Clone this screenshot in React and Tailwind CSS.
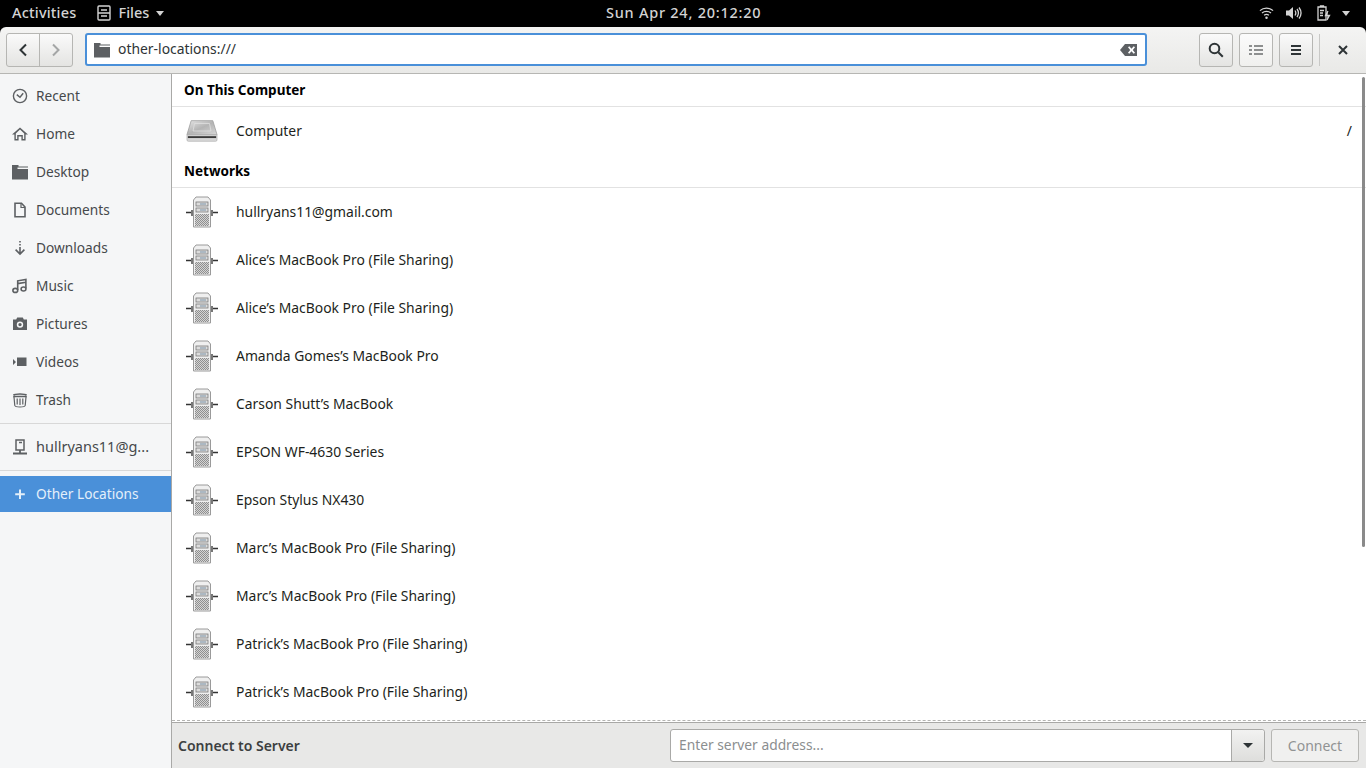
import React from 'react';

const font = "font-['Noto_Sans','Open_Sans',sans-serif]";

const Clock = () => (
  <svg width="16" height="16" viewBox="0 0 16 16" fill="none" stroke="#5d6063" strokeWidth="1.4"><circle cx="8" cy="8" r="6.6" /><path d="M4.8 6.6 8 9.2l3.2-4" /></svg>
);
const HomeIcon = () => (
  <svg width="16" height="16" viewBox="0 0 16 16" fill="#5d6063"><path d="M8 1.500 0 8.500h2.400v6h4.200v-4h2.800v4h4.200v-6H16zM8 3.600l4.200 3.800v5.700h-1.400v-4H5.200v4H3.800V7.400z" /></svg>
);
const FolderIcon = ({ color = '#5d6063' }) => (
  <svg width="16" height="16" viewBox="0 0 16 16" fill={color}><path d="M0 1h6.500v1.400H16v1.200H5.500V5H16v10.500H0z" /></svg>
);
const DocIcon = () => (
  <svg width="16" height="16" viewBox="0 0 16 16" fill="none" stroke="#5d6063" strokeWidth="1.600"><path d="M3 1.300h6.500L13 5v9.700H3z" /><path d="M9 1.500V5.500h4" strokeWidth="1.200" /></svg>
);
const DownIcon = () => (
  <svg width="16" height="16" viewBox="0 0 16 16" fill="none" stroke="#5d6063" strokeWidth="1.600"><path d="M8 1v1.400M8 4v1.400M8 7v6.500M3.600 9.600 8 14l4.400-4.400" /></svg>
);
const MusicIcon = () => (
  <svg width="16" height="16" viewBox="0 0 16 16" fill="none" stroke="#5d6063" strokeWidth="1.600"><path d="M5.700 12V2.800l8.200-1.400v9.200M5.700 5.600l8.200-1.400" /><ellipse cx="3.300" cy="12.400" rx="2.400" ry="2" /><ellipse cx="11.500" cy="11" rx="2.400" ry="2" /></svg>
);
const CameraIcon = () => (
  <svg width="16" height="16" viewBox="0 0 16 16" fill="#5d6063"><path fillRule="evenodd" d="M1 3.500h3.200L5.200 1.500h5.600l1 2H15V14H1zM8 5.400a3.200 3.200 0 1 0 0 6.400 3.200 3.200 0 0 0 0-6.400zm0 1.500a1.700 1.700 0 1 1 0 3.400 1.700 1.700 0 0 1 0-3.400z" /></svg>
);
const VideoIcon = () => (
  <svg width="16" height="16" viewBox="0 0 16 16" fill="#5d6063"><path d="M5 3.500h9.500V12H5zM1 5l3 3-3 3z" /></svg>
);
const TrashIcon = () => (
  <svg width="16" height="16" viewBox="0 0 16 16" fill="none" stroke="#5d6063" strokeWidth="1.200"><path d="M1.500 3.200C3 1.500 13 1.500 14.500 3.200M1.200 4.500h13.600" strokeWidth="1.600" /><path d="M2 5l.8 8.500c.2 1 1.500 1.500 5.200 1.500s5-.5 5.200-1.500L14 5" /><path d="M5.200 6.500v6M8 6.500v6.500M10.800 6.500v6" /></svg>
);
const ServerSmall = () => (
  <svg width="16" height="16" viewBox="0 0 16 16" fill="none" stroke="#5d6063" strokeWidth="1.500"><path d="M4 1h8v10H4z" /><path d="M7 3.500h3" /><path d="M8 11v2.500M1 14.500h14" strokeWidth="1.800" /></svg>
);
const PlusIcon = () => (
  <svg width="16" height="16" viewBox="0 0 16 16" fill="none" stroke="#e4eff9" strokeWidth="2"><path d="M8 3.500v9.500M3.200 8.200h9.600" /></svg>
);

// the drive picture for "Computer"
const DriveIcon = () => (
  <svg width="34" height="24" viewBox="0 0 34 24">
    <defs>
      <linearGradient id="driveTop" x1="0" y1="0" x2="1" y2="1">
        <stop offset="0" stopColor="#e6e6e6" />
        <stop offset="0.5" stopColor="#b4b4b4" />
        <stop offset="1" stopColor="#d8d8d8" />
      </linearGradient>
    </defs>
    <path d="M5.500 1h23L33 16H1z" fill="url(#driveTop)" stroke="#9a9a9a" strokeWidth="0.800" />
    <path d="M9 4h16l1.500 8h-19z" fill="none" stroke="#e2e2e2" strokeWidth="0.800" />
    <path d="M1 16h32v5.500c0 .9-.6 1.500-1.500 1.500h-29c-.9 0-1.500-.6-1.500-1.500z" fill="#d6d6d6" stroke="#a8a8a8" strokeWidth="0.600" />
    <path d="M2 18.500h30" stroke="#3a3a3a" strokeWidth="2" />
  </svg>
);

// tower with two cables, used by every network row
const ServerIcon = () => (
  <svg width="32" height="32" viewBox="0 0 32 32">
    <defs>
      <pattern id="dither" width="2" height="2" patternUnits="userSpaceOnUse">
        <rect width="2" height="2" fill="#d4d4d4" />
        <rect width="1" height="1" fill="#8f8f8f" />
        <rect x="1" y="1" width="1" height="1" fill="#8f8f8f" />
      </pattern>
    </defs>
    <path d="M0 16.500h7M25 16.500h7" stroke="#333" strokeWidth="1.600" />
    <rect x="5" y="14" width="3" height="6" fill="#777" />
    <rect x="24" y="14" width="3" height="6" fill="#777" />
    <path d="M7.500 4 10 1h12l2.500 3v27h-17z" fill="#efefef" stroke="#9a9a9a" strokeWidth="1" />
    <rect x="10" y="6" width="12" height="4" fill="#dcdcdc" stroke="#7a7a7a" strokeWidth="0.800" />
    <rect x="10" y="12" width="12" height="4" fill="#dcdcdc" stroke="#7a7a7a" strokeWidth="0.800" />
    <rect x="14" y="7.500" width="6" height="1" fill="#7c93a8" />
    <rect x="14" y="13.500" width="6" height="1" fill="#7c93a8" />
    <rect x="9" y="18" width="14" height="12" fill="url(#dither)" />
  </svg>
);

const places = [
  ['Recent', Clock],
  ['Home', HomeIcon],
  ['Desktop', FolderIcon],
  ['Documents', DocIcon],
  ['Downloads', DownIcon],
  ['Music', MusicIcon],
  ['Pictures', CameraIcon],
  ['Videos', VideoIcon],
  ['Trash', TrashIcon],
];

const networks = [
  'hullryans11@gmail.com',
  'Alice’s MacBook Pro (File Sharing)',
  'Alice’s MacBook Pro (File Sharing)',
  'Amanda Gomes’s MacBook Pro',
  'Carson Shutt’s MacBook',
  'EPSON WF-4630 Series',
  'Epson Stylus NX430',
  'Marc’s MacBook Pro (File Sharing)',
  'Marc’s MacBook Pro (File Sharing)',
  'Patrick’s MacBook Pro (File Sharing)',
  'Patrick’s MacBook Pro (File Sharing)',
];

const btn = 'h-[34px] w-[34px] flex items-center justify-center rounded-[3px] border border-[#b6b6b3] bg-gradient-to-b from-[#fafafa] to-[#e4e4e2]';

function TopBar() {
  return (
    <div className="h-[27px] shrink-0 bg-black text-[#d3d3d3] flex items-center text-[14.500px] font-medium relative pb-[1px]">
      <span className="ml-3 tracking-[0.2px]">Activities</span>
      <div className="ml-[21px] flex items-center">
        <svg width="14" height="16" viewBox="0 0 14 16" fill="none" stroke="#d3d3d3" strokeWidth="1.400"><rect x="1" y="1" width="12" height="14" rx="1" /><path d="M4 5h6M1 8h12M4 11h6" /></svg>
        <span className="ml-[7px]">Files</span>
        <span className="ml-[7px] w-0 h-0 border-x-[4.500px] border-x-transparent border-t-[5px] border-t-[#d3d3d3]" />
      </div>
      <span className="absolute left-[606px] tracking-[0.75px]">Sun Apr 24, 20:12:20</span>
      <div className="ml-auto mr-[16px] flex items-center">
        <svg width="15" height="14" viewBox="0 0 16 14" fill="none" stroke="#d3d3d3" strokeWidth="1.300"><path d="M1 4.500c4-3.500 10-3.500 14 0M3.200 7c2.700-2.300 6.900-2.300 9.600 0M5.400 9.300c1.500-1.100 3.700-1.100 5.200 0" /><circle cx="8" cy="12" r="1.300" fill="#d3d3d3" stroke="none" /></svg>
        <svg className="ml-[12px]" width="16" height="14" viewBox="0 0 16 14" fill="none" stroke="#d3d3d3" strokeWidth="1.300"><path d="M0 4.500h3L7 1v12L3 9.500H0z" fill="#d3d3d3" stroke="none" /><path d="M9 4.500c1 1.500 1 3.500 0 5M11 3c1.800 2.500 1.800 5.500 0 8M13 1.500c2.600 3.500 2.600 7.500 0 11" /></svg>
        <svg className="ml-[15px]" width="14" height="16" viewBox="0 0 14 16" fill="none" stroke="#d3d3d3" strokeWidth="1.300"><path d="M1 2h8v13H1zM3.500 2V.800h3V2M3 5.500h4M3 8h3M3 10.500h3" /><path d="M11 6 8.500 10.500h4L10 15" fill="#d3d3d3" /></svg>
        <span className="ml-[11px] w-0 h-0 border-x-[4.500px] border-x-transparent border-t-[5px] border-t-[#d3d3d3]" />
      </div>
    </div>
  );
}

function Header() {
  return (
    <div className="h-[47px] shrink-0 bg-gradient-to-b from-[#f4f4f3] to-[#e9e9e7] border-b border-[#b6b6b3] rounded-t-[6px] flex items-center pl-[6px] pr-0 pb-[1px]">
      <div className="flex h-[34px] w-[67px] rounded-[3px] border border-[#b6b6b3] bg-gradient-to-b from-[#fafafa] to-[#e4e4e2]">
        <div className="w-[33px] flex items-center justify-center border-r border-[#b6b6b3]">
          <svg width="12" height="14" viewBox="0 0 12 14" fill="none" stroke="#2e3436" strokeWidth="2"><path d="M9 1.500 3.500 7 9 12.500" /></svg>
        </div>
        <div className="flex-1 flex items-center justify-center">
          <svg width="12" height="14" viewBox="0 0 12 14" fill="none" stroke="#a4a6a6" strokeWidth="2"><path d="M3 1.500 8.500 7 3 12.500" /></svg>
        </div>
      </div>
      <div className="ml-[12px] w-[1062px] h-[33px] bg-white rounded-[3px] border-2 border-[#4a90d9] flex items-center pl-[7px] pr-[7px] text-[13.900px] text-[#2e3436]">
        <FolderIcon color="#5d6063" />
        <span className="ml-[8px]">other-locations:///</span>
        <svg className="ml-auto" width="18" height="14" viewBox="0 0 18 14"><path fillRule="evenodd" fill="#5d6063" d="M5 1h12v12H5L0 7zM8 4.200 10.200 7 8 9.800l1.300 1 2.200-2.500 2.200 2.500 1.300-1L12.800 7 15 4.200l-1.300-1-2.200 2.500-2.200-2.500z" /></svg>
      </div>
      <div className={`ml-[52px] ${btn}`}>
        <svg width="16" height="16" viewBox="0 0 16 16" fill="none" stroke="#2e3436" strokeWidth="2"><circle cx="6.500" cy="6.500" r="4.800" /><path d="m10.300 10.300 4.500 4.500" /></svg>
      </div>
      <div className={`ml-[6px] ${btn} from-[#fbfbfb] to-[#f0f0ee]`}>
        <svg width="14" height="12" viewBox="0 0 14 12" fill="#8d8f8f"><path d="M0 1h3v2H0zM5 1h9v2H5zM0 5h3v2H0zM5 5h9v2H5zM0 9h3v2H0zM5 9h9v2H5z" /></svg>
      </div>
      <div className={`ml-[6px] ${btn}`}>
        <svg width="12" height="12" viewBox="0 0 12 12" fill="#2e3436"><path d="M1 1h10v2H1zM1 5h10v2H1zM1 9h10v2H1z" /></svg>
      </div>
      <div className="ml-[6px] h-[32px] border-l border-[#c8c8c6]" />
      <div className="flex-1 flex justify-center pr-[1px]">
        <svg width="10" height="10" viewBox="0 0 10 10" fill="none" stroke="#2e3436" strokeWidth="2"><path d="m1 1 8 8M9 1 1 9" /></svg>
      </div>
    </div>
  );
}

function Sidebar() {
  return (
    <div className="w-[172px] shrink-0 bg-[#f5f6f7] border-r border-[#a9a9a7] pt-[3px] text-[13.700px] text-[#46494b] flex flex-col">
      {places.map(([name, Icon]) => (
        <div key={name} className="h-[38px] flex items-center pl-[12px] gap-[8px]">
          <Icon />
          <span>{name}</span>
        </div>
      ))}
      <div className="mt-[4px] border-t border-[#d8d8d8]" />
      <div className="mt-[4px] h-[38px] flex items-center pl-[12px] gap-[8px] text-[14.500px]">
        <ServerSmall />
        <span>hullryans11@g...</span>
      </div>
      <div className="mt-[4px] border-t border-[#d8d8d8]" />
      <div className="mt-[5px] h-[36px] bg-[#4a90d9] text-[#e4eff9] flex items-center pl-[12px] gap-[8px]">
        <PlusIcon />
        <span>Other Locations</span>
      </div>
    </div>
  );
}

function Row({ icon, name, right }) {
  return (
    <div className="h-[48px] flex items-center pl-[14px] pr-[14px]">
      <div className="w-[32px] flex justify-center">{icon}</div>
      <span className="ml-[18px]">{name}</span>
      {right && <span className="ml-auto">{right}</span>}
    </div>
  );
}

function Main() {
  return (
    <div className="flex-1 min-w-0 flex flex-col bg-white">
      <div className="flex-1 min-h-0 overflow-hidden relative text-[13.900px] text-[#1d1f20]">
        <div className="h-[33px] border-b border-[#e2e2e2] flex items-center pl-[12px] font-bold text-black text-[13.500px]">On This Computer</div>
        <Row icon={<DriveIcon />} name="Computer" right="/" />
        <div className="h-[33px] border-b border-[#e2e2e2] flex items-center pl-[12px] font-bold text-black text-[13.500px]">Networks</div>
        {networks.map((name, i) => (
          <Row key={i} icon={<ServerIcon />} name={name} />
        ))}
        <div className="absolute right-[1px] top-[3px] w-[3px] h-[470px] rounded-full bg-[#8a8a8a]" />
        <div className="absolute left-0 right-0 bottom-[1px] border-b border-dashed border-[#b4b4b2]" />
      </div>
      <div className="h-[46px] shrink-0 bg-[#e8e8e7] border-t border-[#a8a8a6] flex items-center pl-[6px] pr-[7px] text-[14px]">
        <span className="font-semibold text-[#3c3f41] -mt-[1px]">Connect to Server</span>
        <div className="ml-auto flex h-[33px] w-[595px] rounded-[3px] border border-[#a9a9a7] bg-white">
          <span className="flex-1 flex items-center pl-[8px] text-[#8b8e8f] text-[13.800px]">Enter server address...</span>
          <div className="w-[33px] flex items-center justify-center border-l border-[#a9a9a7] bg-gradient-to-b from-[#f2f2f1] to-[#dededc] rounded-r-[3px]">
            <span className="w-0 h-0 border-x-[5px] border-x-transparent border-t-[5px] border-t-[#2e3436]" />
          </div>
        </div>
        <div className="ml-[6px] w-[88px] h-[33px] rounded-[3px] border border-[#b6b6b3] bg-[#f0f0ef] text-[#909393] flex items-center justify-center">Connect</div>
      </div>
    </div>
  );
}

export default function App() {
  return (
    <div className={`w-[1366px] h-[768px] overflow-hidden bg-black flex flex-col ${font}`}>
      <TopBar />
      <Header />
      <div className="flex-1 min-h-0 flex">
        <Sidebar />
        <Main />
      </div>
    </div>
  );
}
